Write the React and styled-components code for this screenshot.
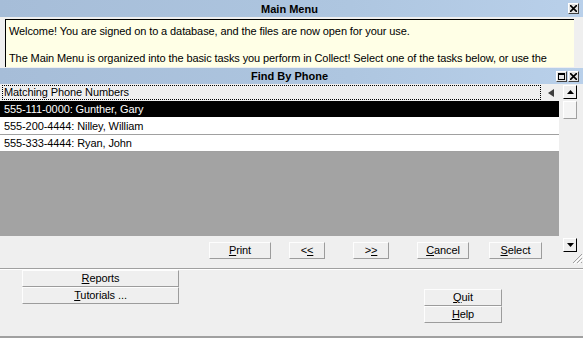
import React from 'react';
import styled, { createGlobalStyle } from 'styled-components';

const GlobalStyle = createGlobalStyle`
    html, body {
        margin: 0;
        height: 100%;
    }
    body {
        background: #efefef;
        font-family: "Liberation Sans", Arial, sans-serif;
        font-size: 11px;
        letter-spacing: -0.1px;
        color: #000;
    }
    #root {
        height: 100%;
    }
`

const Screen = styled.div`
    width: 583px;
    height: 338px;
    display: flex;
    flex-direction: column;
    overflow: hidden;
    background: #efefef;
`

const TitleBar = styled.div`
    height: ${p => p.$h}px;
    flex: none;
    display: grid;
    grid-template-columns: 30px 1fr 30px;
    align-items: center;
    background: linear-gradient(90deg, #a6bdd8 0%, #aec6e0 60%, #b9d0ea 100%);
    padding-right: 4px;
`

const TitleText = styled.div`
    grid-column: 2;
    text-align: center;
    font-weight: bold;
    font-size: 11px;
    letter-spacing: 0;
`

const TitleButtons = styled.div`
    grid-column: 3;
    justify-self: end;
    display: flex;
    gap: 1px;
`

const WinButton = styled.div`
    width: 11px;
    height: 11px;
    box-sizing: border-box;
    border: 1px solid;
    border-color: #fff #404040 #404040 #fff;
    background: #e4e4e4;
    display: flex;
    align-items: center;
    justify-content: center;
`

const InfoPanel = styled.div`
    height: 48px;
    flex: none;
    margin: 2px 9px 0 5px;
    box-sizing: border-box;
    background: #ffffe6;
    border-top: 1px solid #000;
    border-left: 1px solid #000;
    padding: 5px 3px 0;
    line-height: 13.5px;
    overflow: hidden;

    p {
        margin: 0 0 13.5px;
    }
`

const FindWindow = styled.div`
    flex: none;
    height: 200px;
    margin-top: 1px;
    display: flex;
    flex-direction: column;
    border-bottom: 1px solid #a0a0a0;
`

const FindBody = styled.div`
    flex: 1;
    display: grid;
    grid-template-columns: 559px 1fr;
    padding-top: 1px;
`

const ListColumn = styled.div`
    display: flex;
    flex-direction: column;
`

const HeaderRow = styled.div`
    height: 15px;
    display: flex;
    align-items: center;
`

const HeaderLabel = styled.div`
    width: 539px;
    height: 15px;
    margin-left: 2px;
    box-sizing: border-box;
    border: 1px dotted #000;
    padding-left: 1px;
    line-height: 13px;
`

const SortArrow = styled.div`
    margin-left: 7px;
    width: 0;
    height: 0;
    border-top: 4px solid transparent;
    border-bottom: 4px solid transparent;
    border-right: 6px solid #3c3c3c;
`

const ListArea = styled.div`
    height: 135px;
    margin-top: 1px;
    background: #a3a3a3;
    display: flex;
    flex-direction: column;
`

const Row = styled.div`
    height: 16px;
    line-height: 16px;
    padding-left: 4px;
    background: ${p => (p.$selected ? '#000' : '#fff')};
    color: ${p => (p.$selected ? '#fff' : '#000')};
    border-bottom: 1px solid ${p => (p.$selected ? '#fff' : '#a0a0a0')};
`

const ButtonBar = styled.div`
    display: flex;
    padding: 6px 0 0 209px;
`

const Button = styled.div`
    width: ${p => p.$w}px;
    height: 17px;
    margin-left: ${p => p.$ml || 0}px;
    box-sizing: border-box;
    border: 1px solid;
    border-color: #fdfdfd #9c9c9c #9c9c9c #fdfdfd;
    background: #efefef;
    text-align: center;
    line-height: 15px;

    u {
        text-decoration: underline;
    }
`

const ScrollColumn = styled.div`
    display: flex;
    flex-direction: column;
    align-items: flex-start;
    padding-left: 4px;
`

const ScrollButton = styled.div`
    width: 14px;
    height: 14px;
    box-sizing: border-box;
    border: 1px solid;
    border-color: #fff #000 #000 #fff;
    background: #efefef;
    display: flex;
    align-items: center;
    justify-content: center;
    margin-top: ${p => p.$mt || 0}px;
`

const Thumb = styled.div`
    width: 14px;
    height: 18px;
    margin-top: 2px;
    box-sizing: border-box;
    border: 1px solid;
    border-color: #fff #a0a0a0 #a0a0a0 #fff;
    background: #f4f4f4;
`

const Grip = styled.div`
    align-self: flex-end;
    margin-top: 1px;
    display: flex;
`

const BottomArea = styled.div`
    flex: 1;
    display: flex;
    justify-content: space-between;
    align-items: flex-start;
    padding: 0 81px 0 22px;
    border-top: 1px solid #fff;
    border-bottom: 2px solid #a0a0a0;
`

const ButtonStack = styled.div`
    display: flex;
    flex-direction: column;
    margin-top: ${p => p.$mt || 0}px;
`

const CloseIcon = () => (
    <svg width="7" height="7" viewBox="0 0 7 7">
        <path d="M0 0 L7 7 M7 0 L0 7" stroke="#000" strokeWidth="1.6" />
    </svg>
);

const RestoreIcon = () => (
    <svg width="7" height="7" viewBox="0 0 7 7">
        <rect x="0.5" y="0.5" width="6" height="6" fill="none" stroke="#000" strokeWidth="1" />
        <rect x="0" y="0" width="7" height="2" fill="#000" />
    </svg>
);

const ArrowIcon = ({ down }) => (
    <svg width="7" height="4" viewBox="0 0 7 4">
        <path d={down ? 'M0 0 H7 L3.5 4 Z' : 'M0 4 H7 L3.5 0 Z'} fill="#000" />
    </svg>
);

const GripIcon = () => (
    <svg width="11" height="11" viewBox="0 0 11 11">
        <path d="M10 1 L1 10 M10 5 L5 10 M10 9 L9 10" stroke="#a0a0a0" strokeWidth="1" />
        <path d="M11 2 L2 11 M11 6 L6 11" stroke="#fff" strokeWidth="1" />
    </svg>
);

const rows = [
    '555-111-0000: Gunther, Gary',
    '555-200-4444: Nilley, William',
    '555-333-4444: Ryan, John',
];

export default function App() {
    return (
        <Screen>
            <GlobalStyle />
            <TitleBar $h={17}>
                <TitleText>Main Menu</TitleText>
                <TitleButtons>
                    <WinButton><CloseIcon /></WinButton>
                </TitleButtons>
            </TitleBar>
            <InfoPanel>
                <p>Welcome! You are signed on to a database, and the files are now open for your use.</p>
                <p>
                    The Main Menu is organized into the basic tasks you perform in Collect! Select one of the tasks below, or use the
                    Menus at the top for quick access to information and tools.
                </p>
            </InfoPanel>
            <FindWindow>
                <TitleBar $h={16}>
                    <TitleText>Find By Phone</TitleText>
                    <TitleButtons>
                        <WinButton><RestoreIcon /></WinButton>
                        <WinButton><CloseIcon /></WinButton>
                    </TitleButtons>
                </TitleBar>
                <FindBody>
                    <ListColumn>
                        <HeaderRow>
                            <HeaderLabel>Matching Phone Numbers</HeaderLabel>
                            <SortArrow />
                        </HeaderRow>
                        <ListArea>
                            {rows.map((r, i) => (
                                <Row key={r} $selected={i === 0}>{r}</Row>
                            ))}
                        </ListArea>
                        <ButtonBar>
                            <Button $w={62}><u>P</u>rint</Button>
                            <Button $w={36} $ml={18}>&lt;<u>&lt;</u></Button>
                            <Button $w={36} $ml={28}>&gt;<u>&gt;</u></Button>
                            <Button $w={52} $ml={28}><u>C</u>ancel</Button>
                            <Button $w={53} $ml={20}><u>S</u>elect</Button>
                        </ButtonBar>
                    </ListColumn>
                    <ScrollColumn>
                        <ScrollButton><ArrowIcon /></ScrollButton>
                        <Thumb />
                        <ScrollButton $mt={119}><ArrowIcon down /></ScrollButton>
                        <Grip><GripIcon /></Grip>
                    </ScrollColumn>
                </FindBody>
            </FindWindow>
            <BottomArea>
                <ButtonStack>
                    <Button $w={157}><u>R</u>eports</Button>
                    <Button $w={157}><u>T</u>utorials ...</Button>
                </ButtonStack>
                <ButtonStack $mt={19}>
                    <Button $w={78}><u>Q</u>uit</Button>
                    <Button $w={78}><u>H</u>elp</Button>
                </ButtonStack>
            </BottomArea>
        </Screen>
    );
}
